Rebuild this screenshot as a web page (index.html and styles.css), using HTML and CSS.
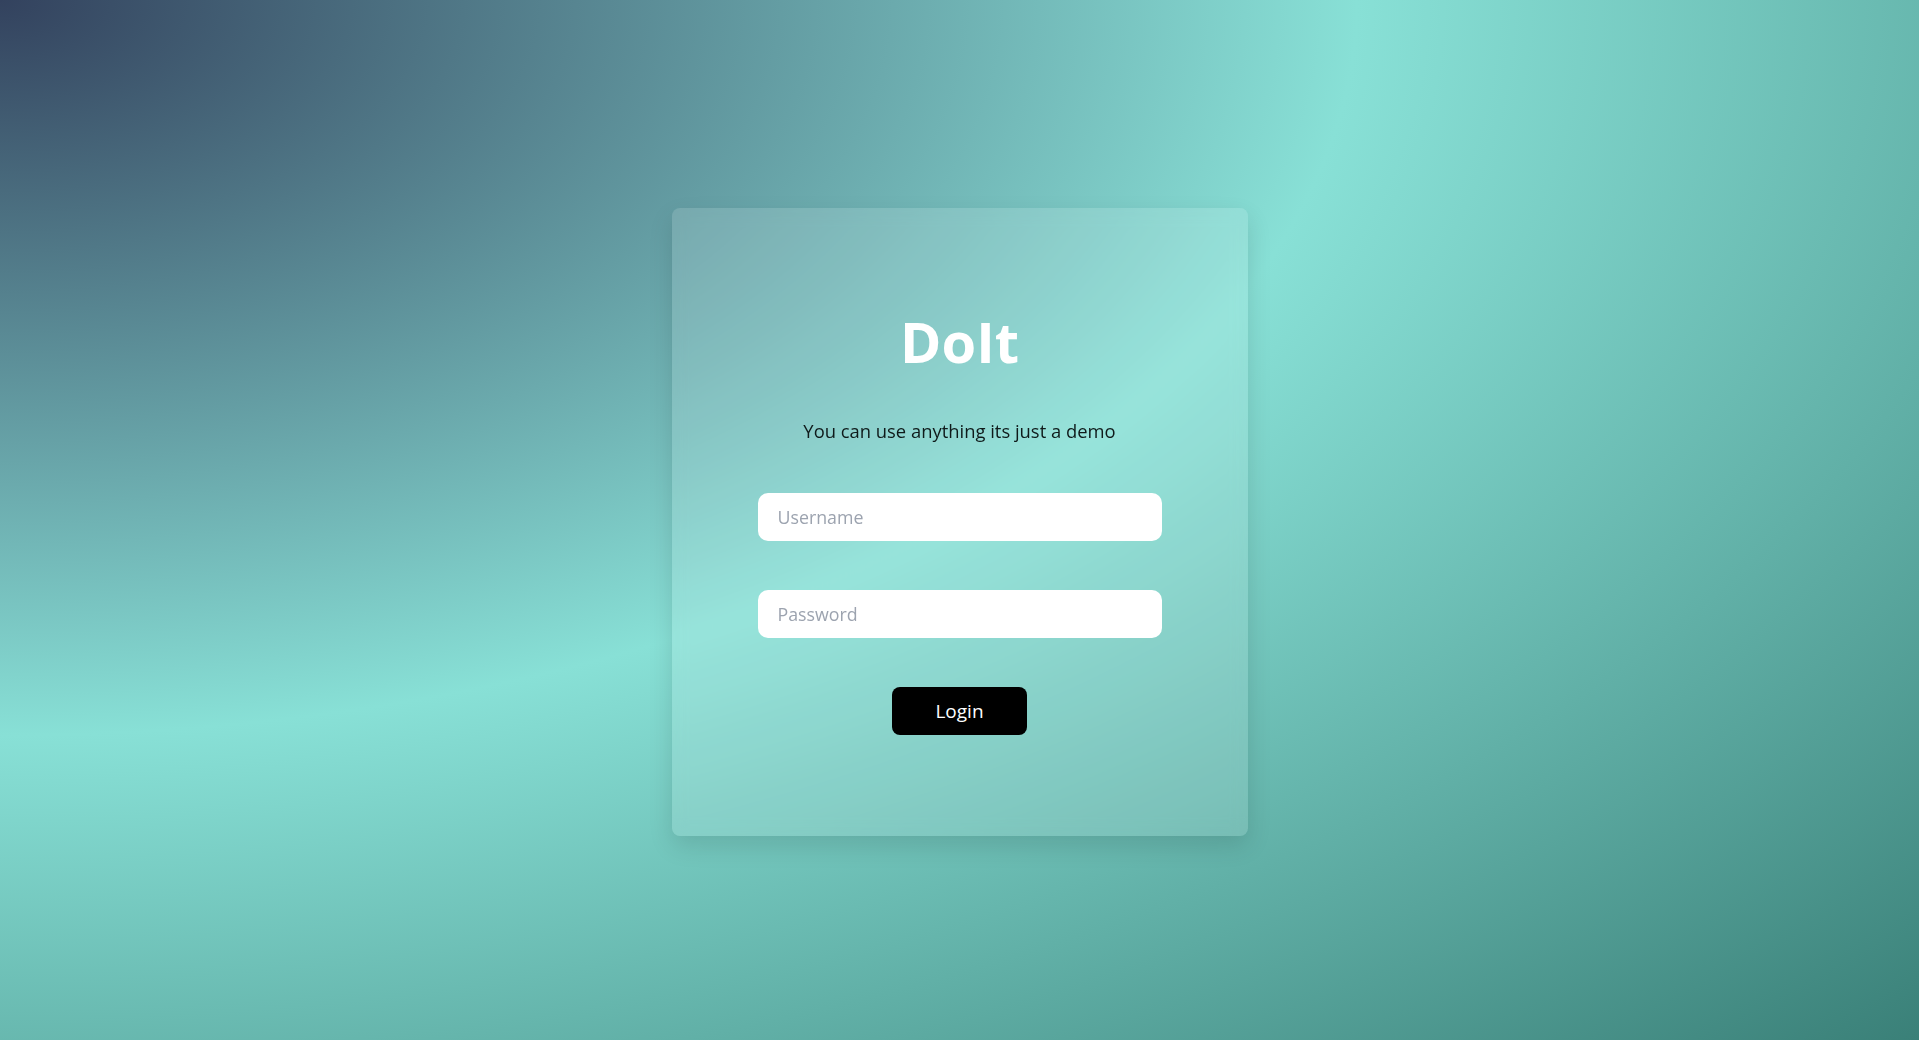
FILE: index.html
```html
<!DOCTYPE html>
<html lang="en">
<head>
<meta charset="utf-8">
<title>DoIt</title>
<link rel="stylesheet" href="styles.css">
</head>
<body>
  <main class="page">
    <section class="card">
      <h1 class="title">DoIt</h1>
      <p class="subtitle">You can use anything its just a demo</p>
      <form class="form">
        <input class="field" type="text" placeholder="Username">
        <input class="field" type="password" placeholder="Password">
        <button class="btn" type="button">Login</button>
      </form>
    </section>
  </main>
</body>
</html>
```

FILE: styles.css
```css
* {
  box-sizing: border-box;
}

html, body {
  margin: 0;
  padding: 0;
  height: 100%;
}

body {
  font-family: "Open Sans", "Noto Sans", sans-serif;
  background: radial-gradient(ellipse at top left, #33425e 0%, #88e0d6 50%, #3a8078 100%);
  background-attachment: fixed;
  overflow: hidden;
}

.page {
  min-height: 100vh;
  display: flex;
  align-items: center;
  justify-content: center;
  padding-top: 4px;
}

.card {
  width: 576px;
  height: 628px;
  padding: 101px 0;
  display: flex;
  flex-direction: column;
  align-items: center;
  background: rgba(255, 255, 255, 0.13);
  backdrop-filter: blur(8px);
  border-radius: 8px;
  box-shadow: 0 10px 24px rgba(0, 0, 0, 0.12);
}

.title {
  margin: 0;
  font-size: 56px;
  line-height: 64px;
  font-weight: 700;
  color: #ffffff;
}

.subtitle {
  margin: 46px 0 0;
  font-size: 18.4px;
  line-height: 24px;
  color: #0f1a1a;
}

.form {
  margin-top: 50px;
  width: 404px;
  display: flex;
  flex-direction: column;
  align-items: center;
  gap: 49px;
}

.field {
  width: 100%;
  height: 48px;
  border: none;
  outline: none;
  border-radius: 10px;
  background: #ffffff;
  padding: 0 20px;
  font-family: inherit;
  font-size: 17.8px;
  color: #1f2937;
}

.field::placeholder {
  color: #9ca3af;
}

.btn {
  width: 135px;
  height: 48px;
  border: none;
  border-radius: 8px;
  background: #000000;
  color: #ffffff;
  font-family: inherit;
  font-size: 19px;
  cursor: pointer;
}
```
